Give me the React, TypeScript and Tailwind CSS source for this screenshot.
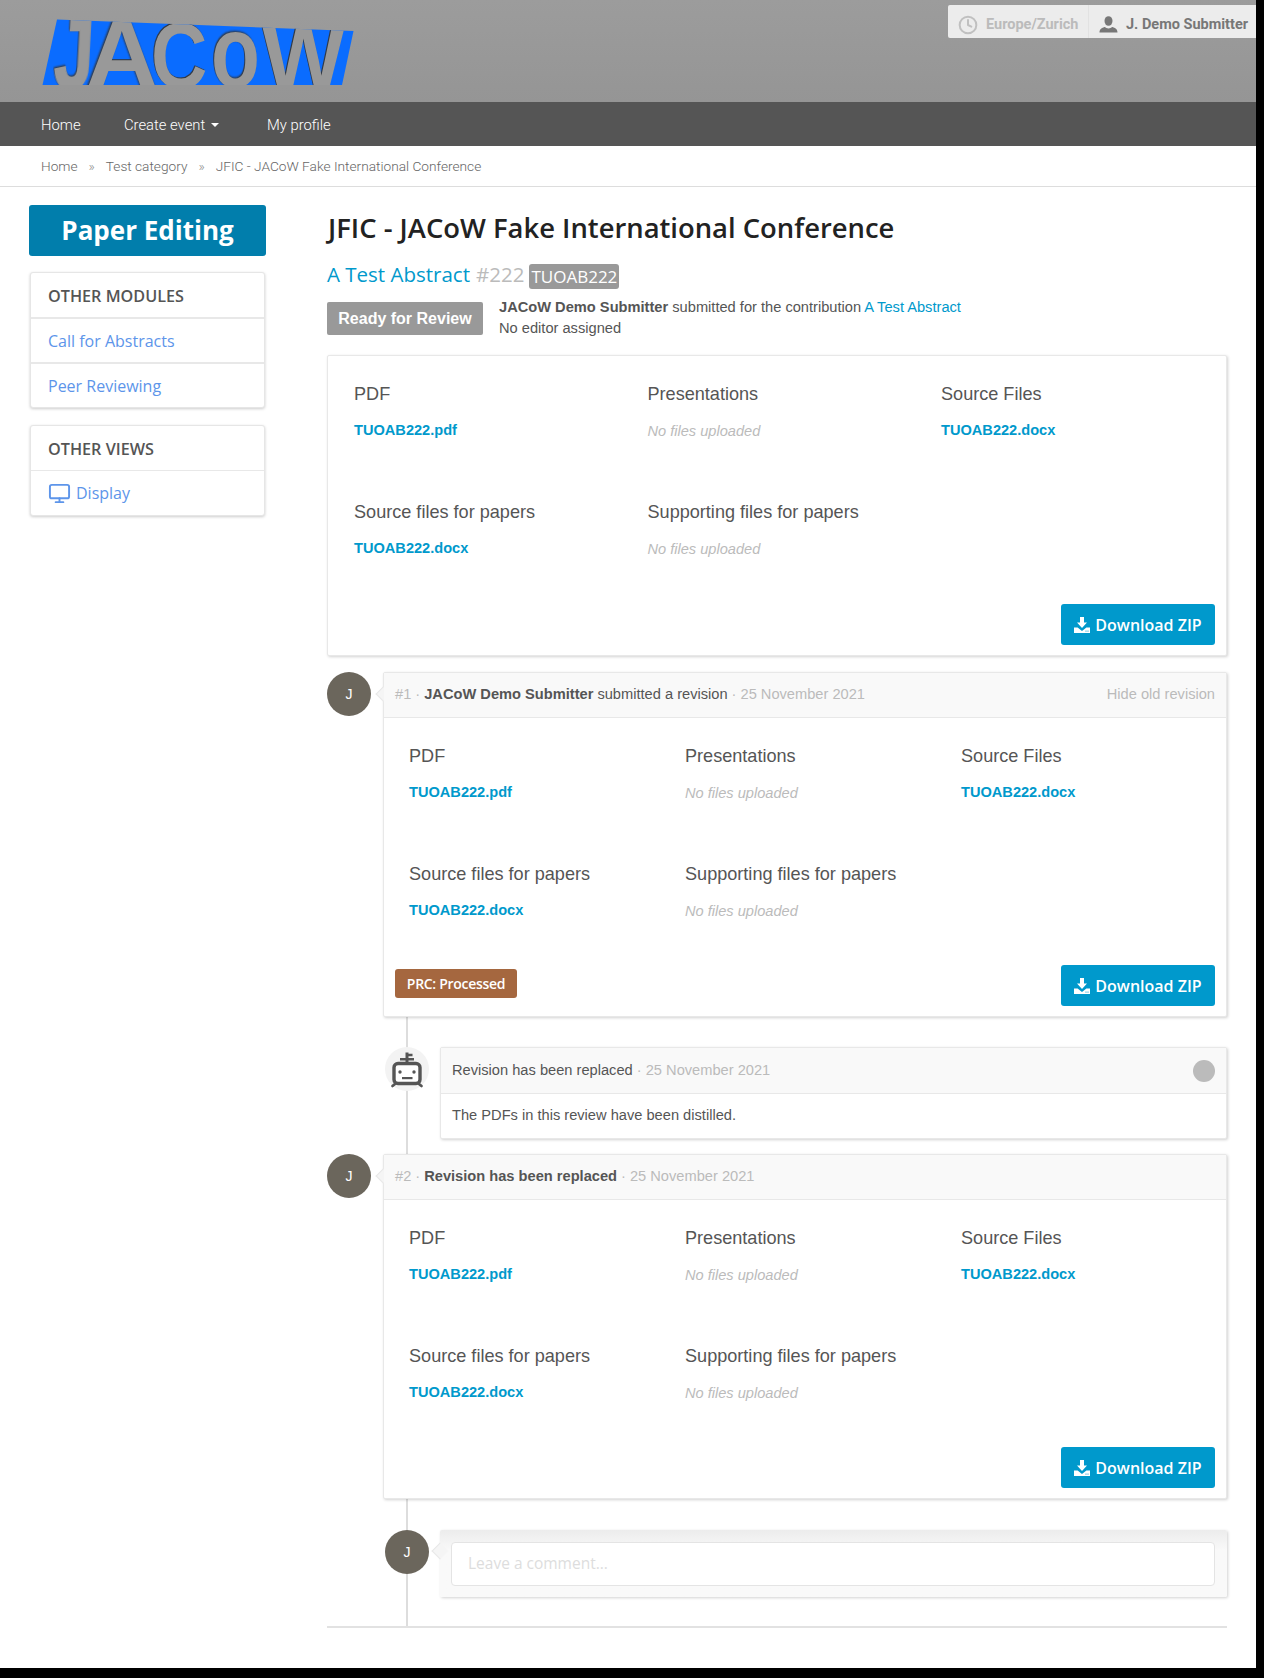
import React from "react";
import { Clock, Monitor } from "lucide-react";

const MULI = "font-['Open_Sans',sans-serif]";
const FONT = "font-['Liberation_Sans',sans-serif]";

function Logo() {
  const letters = [
    { c: "J", x: 53, sx: 0.7, sy: 1.0, skew: -3, fs: 100, y: 88, sw: 2 },
    { c: "A", x: 85, sx: 1.02, sy: 0.98, skew: 0, fs: 100, y: 88, sw: 0 },
    { c: "C", x: 151, sx: 0.78, sy: 0.92, skew: 0, fs: 100, y: 88, sw: 0 },
    { c: "o", x: 211, sx: 0.8, sy: 1.02, skew: 0, fs: 100, y: 87, sw: 0 },
    { c: "W", x: 262, sx: 0.88, sy: 0.9, skew: 0, fs: 100, y: 88, sw: 0 },
  ];
  return (
    <svg width="360" height="102" viewBox="0 0 360 102" className="block">
      <defs>
        <clipPath id="logo-clip">
          <polygon points="57,19.5 353.5,31 342,85 42.5,85" />
        </clipPath>
      </defs>
      <polygon points="57,19.5 353.5,31 342,85 42.5,85" fill="#0a6cff" />
      <g clipPath="url(#logo-clip)">
        {letters.map((l) => (
          <g key={l.c} transform={`translate(${l.x} ${l.y}) skewX(${l.skew}) scale(${l.sx} ${l.sy})`} style={{ filter: "drop-shadow(-1px -0.8px 0.8px #333)" }}>
            <text x="0" y="0" fontFamily="Liberation Sans" fontWeight="700" fontSize={l.fs} fill="#999" stroke="#999" strokeWidth={l.sw}>
              {l.c}
            </text>
          </g>
        ))}
      </g>
    </svg>
  );
}

function UserIcon() {
  return (
    <svg width="19" height="17" viewBox="0 0 19 17" fill="#777">
      <ellipse cx="9.5" cy="5" rx="4" ry="4.8" />
      <path d="M0.5 16.5c0-3.6 2.6-4.6 5.4-5.4.7.8 2.1 1.3 3.6 1.3s2.9-.5 3.6-1.3c2.8.8 5.4 1.8 5.4 5.4z" />
    </svg>
  );
}

function DownloadIcon() {
  return (
    <svg width="16" height="16" viewBox="0 0 16 16" fill="#fff" className="shrink-0">
      <path d="M6 0h4v5.5h3L8 11 3 5.5h3z" />
      <path d="M0 10.5h3.6L8 14l4.4-3.5H16V16H0z" />
      <rect x="11.5" y="13.6" width="1" height="1" fill="#0099cc" />
      <rect x="13.5" y="13.6" width="1" height="1" fill="#0099cc" />
    </svg>
  );
}

function RobotIcon() {
  return (
    <svg width="44" height="44" viewBox="0 0 44 44" fill="none" stroke="#555">
      <path d="M22 5.5v11" strokeWidth="3" />
      <path d="M21 8h6.5M15 12.2h14" strokeWidth="2.4" />
      <rect x="9" y="16.5" width="26" height="20" rx="4" strokeWidth="3.4" fill="#fff" />
      <circle cx="15" cy="25" r="1.7" fill="#555" stroke="none" />
      <circle cx="29" cy="25" r="1.7" fill="#555" stroke="none" />
      <rect x="17" y="30" width="10.5" height="2.2" fill="#555" stroke="none" />
      <path d="M10 37l-2.5 2M34 37l2.5 2" strokeWidth="2.8" strokeLinecap="round" />
    </svg>
  );
}

function Heading({ children }: { children: React.ReactNode }) {
  return <div className={`${FONT} text-[18.1px] leading-[26px] text-[#555]`}>{children}</div>;
}

function FileCol({ title, file }: { title?: string; file?: string }) {
  if (!title) return <div />;
  return (
    <div>
      <Heading>{title}</Heading>
      {file ? (
        <div className={`mt-[11px] ${FONT} text-[14.6px] leading-[24px] font-bold text-[#0099cc]`}>{file}</div>
      ) : (
        <div className={`mt-[12px] ${FONT} text-[14.6px] leading-[24px] italic text-[#bbb]`}>No files uploaded</div>
      )}
    </div>
  );
}

function Files({ pad, cols, h2 }: { pad: string; cols: string; h2: string }) {
  return (
    <div className={pad}>
      <div className={`grid ${cols} h-[118px]`}>
        <FileCol title="PDF" file="TUOAB222.pdf" />
        <FileCol title="Presentations" />
        <FileCol title="Source Files" file="TUOAB222.docx" />
      </div>
      <div className={`grid ${cols} ${h2}`}>
        <FileCol title="Source files for papers" file="TUOAB222.docx" />
        <FileCol title="Supporting files for papers" />
        <div />
      </div>
    </div>
  );
}

function DownloadButton() {
  return (
    <button className={`flex items-center justify-center gap-[5px] w-[154px] h-[41px] rounded-[3px] bg-[#0099cc] text-white text-[16px] font-semibold ${MULI}`}>
      <DownloadIcon />
      Download ZIP
    </button>
  );
}

function Arrow({ top, color = "bg-[#f5f5f5]" }: { top: string; color?: string }) {
  return <div className={`absolute left-[-6px] ${top} w-[12px] h-[12px] rotate-45 ${color} border-l border-b border-[#e8e8e8]`} />;
}

function Avatar() {
  return (
    <div className={`w-[44px] h-[44px] rounded-full bg-[#6b665c] text-white flex items-center justify-center text-[14px] ${FONT} shrink-0 relative z-10`}>
      J
    </div>
  );
}

const PANEL = "bg-white border border-[#e8e8e8] rounded-[2px] shadow-[1px_1px_3px_rgba(0,0,0,0.18)]";

function Revision({ head, badge }: { head: React.ReactNode; badge?: boolean }) {
  return (
    <div className="flex relative z-10">
      <Avatar />
      <div className={`ml-[12px] flex-1 relative ${PANEL}`}>
        <Arrow top="top-[15px]" />
        <div className={`relative h-[45px] bg-[#f9f9f9] border-b border-[#e8e8e8] flex items-center pl-[11px] pr-[11px] text-[14.65px] ${FONT} text-[#555]`}>
          {head}
        </div>
        <Files pad="pl-[25px] pt-[25px]" cols="grid-cols-[276px_276px_1fr]" h2="h-[104px]" />
        <div className="flex justify-between pl-[11px] pr-[11px] pb-[10px]">
          {badge ? (
            <div className={`mt-[4px] self-start w-[122px] h-[29px] rounded-[3px] bg-[#a5673f] text-white text-[14px] font-semibold flex items-center justify-center tracking-[-0.3px] ${MULI}`}>
              PRC: Processed
            </div>
          ) : (
            <div />
          )}
          <DownloadButton />
        </div>
      </div>
    </div>
  );
}

function SidePanel({ title, className, children }: { title: string; className: string; children: React.ReactNode }) {
  return (
    <div className={`mx-[1px] ${className} bg-white border border-[#e6e6e6] rounded-[3px] shadow-[0_1px_3px_rgba(0,0,0,0.2)]`}>
      <div className={`h-[44px] flex items-center pl-[17px] pt-[2px] text-[16.2px] font-semibold text-[#555] ${MULI}`}>{title}</div>
      {children}
    </div>
  );
}

function SideLink({ children, thick }: { children: React.ReactNode; thick?: boolean }) {
  return (
    <div className={`h-[45px] flex items-center gap-[5px] pl-[17px] text-[16px] text-[#5d95ea] ${MULI} ${thick ? "border-t-2 border-[#e8e8e8]" : "border-t border-[#e8e8e8]"}`}>
      {children}
    </div>
  );
}

export default function App() {
  return (
    <div className="bg-black w-[1264px] h-[1678px] overflow-hidden">
      <div className="bg-white w-[1256px] h-[1668px] flex flex-col">
        <header className="relative h-[102px] bg-gradient-to-b from-[#9c9c9c] to-[#959595]">
          <Logo />
          <div className="absolute right-0 top-[5px] h-[33px] w-[308px] bg-[#ececec] rounded-l-[2px] flex items-center font-['Roboto',sans-serif] font-bold text-[14.5px]">
            <div className="w-[141px] h-full flex items-center pl-[10px] pt-[6px] gap-[8px] text-[#bbb] border-r border-[#e2e2e2]">
              <Clock size={20} strokeWidth={2.4} color="#c0c0c0" />
              <span>Europe/Zurich</span>
            </div>
            <div className="flex-1 h-full flex items-center pl-[10px] pt-[6px] gap-[8px] text-[#777] whitespace-nowrap">
              <UserIcon />
              <span>J. Demo Submitter</span>
            </div>
          </div>
        </header>
        <nav className="h-[44px] bg-[#555] flex items-center pl-[41px] pt-[2px] font-['Roboto',sans-serif] font-light text-[14.8px] text-white">
          <span className="w-[83px]">Home</span>
          <span className="w-[143px] flex items-center gap-[6px]">
            Create event
            <span className="w-0 h-0 border-x-[4px] border-x-transparent border-t-[4px] border-t-white" />
          </span>
          <span>My profile</span>
        </nav>
        <div className="h-[41px] border-b border-[#ddd] flex items-center pl-[41px] font-['Roboto',sans-serif] font-light text-[13.7px] text-[#666]">
          <span>Home</span>
          <span className="mx-[11px] text-[#888]">»</span>
          <span>Test category</span>
          <span className="mx-[11px] text-[#888]">»</span>
          <span>JFIC - JACoW Fake International Conference</span>
        </div>
        <div className="flex flex-1 pl-[29px]">
          <aside className="w-[237px] pt-[18px] shrink-0">
            <div className={`h-[51px] rounded-[3px] bg-[#017eac] text-white flex items-center justify-center text-[26px] font-bold ${MULI}`}>
              Paper Editing
            </div>
            <SidePanel title="OTHER MODULES" className="mt-[16px]">
              <SideLink thick>Call for Abstracts</SideLink>
              <SideLink thick>Peer Reviewing</SideLink>
            </SidePanel>
            <SidePanel title="OTHER VIEWS" className="mt-[17px]">
              <SideLink>
                <Monitor size={23} strokeWidth={2} />
                Display
              </SideLink>
            </SidePanel>
          </aside>
          <main className="ml-[61px] w-[900px]">
            <h1 className={`mt-[23px] h-[36px] pl-[1px] leading-[36px] text-[27.4px] font-semibold text-[#222] ${MULI}`}>
              JFIC - JACoW Fake International Conference
            </h1>
            <div className={`mt-[14px] h-[28px] flex items-center text-[20.5px] ${MULI}`}>
              <span className="text-[#0099cc]">A Test Abstract</span>
              <span className="ml-[6px] text-[#bbb]">#222</span>
              <span className="ml-[5px] h-[25px] w-[90px] rounded-[3px] bg-[#999] text-white flex items-center justify-center text-[17px] mt-[5px]">TUOAB222</span>
            </div>
            <div className="mt-[9px] h-[42px] flex">
              <div className={`mt-[5px] w-[156px] h-[33px] rounded-[2px] bg-[#999] text-white font-bold text-[16px] flex items-center justify-center ${FONT}`}>
                Ready for Review
              </div>
              <div className={`ml-[16px] text-[14.65px] leading-[21px] text-[#555] ${FONT}`}>
                <div>
                  <b>JACoW Demo Submitter</b> submitted for the contribution <span className="text-[#0099cc]">A Test Abstract</span>
                </div>
                <div>No editor assigned</div>
              </div>
            </div>
            <section className={`mt-[16px] h-[301px] ${PANEL}`}>
              <Files pad="pl-[26px] pt-[25px]" cols="grid-cols-[293.5px_293.5px_1fr]" h2="h-[105px]" />
              <div className="flex justify-end pr-[11px]">
                <DownloadButton />
              </div>
            </section>
            <div className="relative mt-[16px] pb-[29px] border-b-2 border-[#e2e2e2]">
              <div className="absolute left-[79px] top-0 bottom-0 w-[2px] bg-[#ddd]" />
              <Revision
                badge
                head={
                  <>
                    <span className="text-[#bbb]">#1</span>
                    <span className="mx-[4px] text-[#bbb]">·</span>
                    <b>JACoW Demo Submitter</b>
                    <span className="ml-[4px]">submitted a revision</span>
                    <span className="mx-[4px] text-[#bbb]">·</span>
                    <span className="text-[#bbb]">25 November 2021</span>
                    <span className="ml-auto text-[#bbb]">Hide old revision</span>
                  </>
                }
              />
              <div className="flex relative z-10 mt-[30px] ml-[58px]">
                <div className="w-[44px] h-[44px] rounded-full bg-[#f3f3f3] shrink-0">
                  <RobotIcon />
                </div>
                <div className={`ml-[11px] flex-1 relative ${PANEL}`}>
                  <div className={`h-[46px] bg-[#f9f9f9] border-b border-[#e8e8e8] flex items-center justify-between pl-[11px] pr-[11px] text-[14.65px] ${FONT} text-[#555]`}>
                    <span>
                      Revision has been replaced <span className="text-[#bbb]">· 25 November 2021</span>
                    </span>
                    <span className="w-[22px] h-[22px] rounded-full bg-[#bbb]" />
                  </div>
                  <div className={`h-[44px] flex items-center pl-[11px] text-[14.65px] ${FONT} text-[#555]`}>The PDFs in this review have been distilled.</div>
                </div>
              </div>
              <div className="mt-[15px]">
                <Revision
                  head={
                    <>
                      <span className="text-[#bbb]">#2</span>
                      <span className="mx-[4px] text-[#bbb]">·</span>
                      <b>Revision has been replaced</b>
                      <span className="mx-[4px] text-[#bbb]">·</span>
                      <span className="text-[#bbb]">25 November 2021</span>
                    </>
                  }
                />
              </div>
              <div className="flex relative z-10 mt-[31px] ml-[58px]">
                <Avatar />
                <div className="ml-[11px] flex-1 h-[67px] relative bg-gradient-to-b from-[#ececec] to-[#f9f9f9] to-30% rounded-[2px] shadow-[1px_1px_3px_rgba(0,0,0,0.18)] pl-[11px] pr-[12px] pt-[12px]">
                  <Arrow top="top-[15px]" color="bg-[#f5f5f5]" />
                  <div className={`relative h-[44px] bg-white border border-[#e4e4e4] rounded-[4px] flex items-center pl-[16px] text-[15.5px] text-[#ddd] ${MULI}`}>
                    Leave a comment...
                  </div>
                </div>
              </div>
            </div>
          </main>
        </div>
      </div>
    </div>
  );
}
